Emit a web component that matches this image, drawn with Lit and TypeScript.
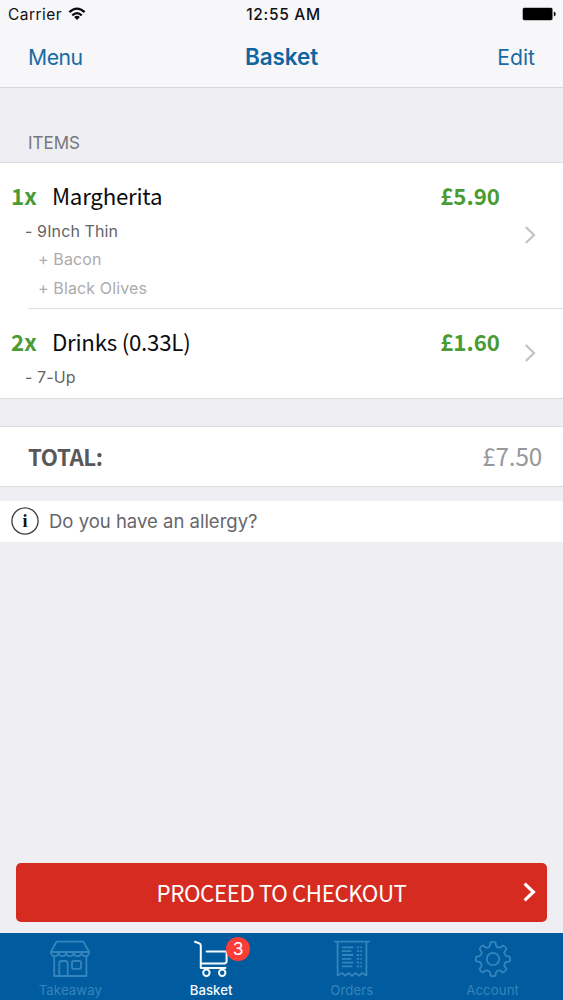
import { LitElement, html, css, svg } from "lit";
import { customElement, property } from "lit/decorators.js";

interface Item {
  qty: string;
  name: string;
  price: string;
  variant: string;
  extras: string[];
}

const ITEMS: Item[] = [
  { qty: "1x", name: "Margherita", price: "£5.90", variant: "- 9Inch Thin", extras: ["+ Bacon", "+ Black Olives"] },
  { qty: "2x", name: "Drinks (0.33L)", price: "£1.60", variant: "- 7-Up", extras: [] },
];

/* Eight-toothed cog outline centred on (20, 19). */
function cogPath(): string {
  const pts: string[] = [];
  const at = (deg: number, r: number) => {
    const a = (deg * Math.PI) / 180;
    return `${(20 + r * Math.sin(a)).toFixed(2)} ${(19 - r * Math.cos(a)).toFixed(2)}`;
  };
  for (let i = 0; i < 8; i++) {
    const c = i * 45;
    pts.push(`${i ? "L" : "M"}${at(c - 12, 13.9)}`);
    pts.push(`L${at(c - 8.5, 16.8)}`);
    pts.push(`Q${at(c, 17.8)} ${at(c + 8.5, 16.8)}`);
    pts.push(`L${at(c + 12, 13.9)}`);
    pts.push(`Q${at(c + 22.5, 11.4)} ${at(c + 33, 13.9)}`);
  }
  return pts.join("") + "Z";
}

const icons: Record<string, unknown> = {
  Takeaway: svg`
    <path d="M6.5 1.6h27l5.6 10.4H0.9z"/>
    <path d="M0.9 12c0 5.4 7.6 5.4 7.6 0c0 5.4 7.7 5.4 7.7 0c0 5.4 7.6 5.4 7.6 0c0 5.4 7.7 5.4 7.7 0c0 5.4 7.6 5.4 7.6 0"/>
    <path d="M4.2 16V36H36.4V16"/>
    <path d="M9.3 36V23.4q0-2.4 2.4-2.4h3.6q2.4 0 2.4 2.4V36"/>
    <rect x="22" y="21" width="9" height="7.8" rx="1.6"/>`,
  Basket: svg`
    <path d="M4 1.8L8 3.2Q9.8 3.8 9.8 5.6V28H34.5"/>
    <path d="M15.6 11.6H35.6V21Q35.6 23.4 33.2 23.4H9.8"/>
    <circle cx="15.4" cy="32.8" r="3.2"/>
    <circle cx="31.2" cy="32.8" r="3.2"/>`,
  Orders: svg`
    <path d="M3 1.6H37"/>
    <path d="M5.6 1.6V35.6L10 33L13.4 35.8L16.8 32.8L20 35.8L23.4 32.8L26.8 35.8L30.2 33L34.4 35.6V1.6"/>
    <path d="M10.6 7.4h10M10.6 11.2h8M10.6 15h10M10.6 18.8h8M10.6 22.6h10M10.6 26.4h9"/>
    <path stroke-linecap="butt" stroke-dasharray="2.4 1" d="M24.8 7.4h5M24.8 11.2h5M24.8 15h5M24.8 18.8h5M24.8 22.6h5M24.8 26.4h5"/>`,
  Account: svg`<path d="${cogPath()}"/><circle cx="20" cy="19" r="6.2"/>`,
};

@customElement("status-bar")
class StatusBar extends LitElement {
  static styles = css`
    :host { display: grid; grid-template-columns: 1fr auto 1fr; align-items: center; height: 28px;
      padding: 0 7px 0 8px; font-size: 15.5px; letter-spacing: 0.45px; color: #101013; }
    .left { display: flex; align-items: center; gap: 6px; }
    .time { font-weight: 550; font-size: 15.5px; letter-spacing: 0.7px; padding-left: 3px; }
    .battery { justify-self: end; }
    svg { display: block; }
  `;
  render() {
    return html`
      <div class="left">
        <span>Carrier</span>
        <svg width="18" height="14" viewBox="0 0 18 14">
          <g fill="none" stroke="#09090b" stroke-width="2.3">
            <path d="M1.4 5.2Q9-2 16.6 5.2"/><path d="M4.3 8.3Q9 3.9 13.7 8.3"/>
          </g>
          <path fill="#09090b" d="M6.1 10Q9 7.4 11.9 10L9 13z"/>
        </svg>
      </div>
      <span class="time">12:55 AM</span>
      <svg class="battery" width="34" height="14" viewBox="0 0 34 14">
        <rect x="0.4" y="0.4" width="30.4" height="13.2" rx="2" fill="#88888b"/>
        <rect x="1" y="1" width="29.2" height="12" rx="1.4" fill="#000"/>
        <path d="M31.8 4.6q2 .6 2 2.4t-2 2.4z" fill="#111"/>
      </svg>`;
  }
}

@customElement("basket-row")
class BasketRow extends LitElement {
  @property({ attribute: false }) item!: Item;
  static styles = css`
    :host { display: flex; align-items: center; padding: 0 27px 0 11px; }
    .body { flex: 1; align-self: flex-start; padding-top: 18px; }
    .head { display: flex; font: 400 22.3px/29px "Noto Sans CJK SC", "Noto Sans", sans-serif; color: #0c0c0e; }
    .qty { width: 41px; font-weight: 700; color: #4b9b33; }
    .name { flex: 1; letter-spacing: -0.25px; }
    .price { font-weight: 700; color: #4b9b33; letter-spacing: 0; }
    .sub { margin: 6.7px 0 0 14px; font-size: 16px; line-height: 28.5px; letter-spacing: 0.12px; color: #646466; }
    .extra { padding-left: 13px; color: #ababad; }
    .chevron { margin: 0 0 1px 25px; display: block; }
  `;
  render() {
    const i = this.item;
    return html`
      <div class="body">
        <div class="head">
          <span class="qty">${i.qty}</span><span class="name">${i.name}</span><span class="price">${i.price}</span>
        </div>
        <div class="sub">
          <div>${i.variant}</div>
          ${i.extras.map((e) => html`<div class="extra">${e}</div>`)}
        </div>
      </div>
      <svg class="chevron" width="11" height="18" viewBox="0 0 11 18">
        <path d="M0.8 1L9 9L0.8 17" fill="none" stroke="#c4c4c8" stroke-width="2.3"/>
      </svg>`;
  }
}

@customElement("tab-item")
class TabItem extends LitElement {
  @property() label = "";
  @property() badge = "";
  @property({ type: Boolean }) active = false;
  static styles = css`
    :host { display: flex; flex-direction: column; align-items: center; padding-top: 7px; color: #3585bd; }
    :host([active]) { color: #f4f9fc; }
    .icon { position: relative; display: block; height: 38px; }
    svg { display: block; }
    .badge { position: absolute; left: 35px; top: -3px; width: 24px; height: 24px; border-radius: 50%;
      background: #fb3d38; color: #fff; font-size: 17.5px; line-height: 24px; text-align: center; }
    .label { font-size: 13.2px; line-height: 16px; margin-top: 4px; letter-spacing: 0.1px; }
    .strong { font-weight: 500; letter-spacing: 0; }
  `;
  render() {
    return html`
      <div class="icon">
        <svg width="40" height="38" viewBox="0 0 40 38" fill="none" stroke="currentColor"
          stroke-width=${this.active ? 2 : 1.8} stroke-linejoin="round" stroke-linecap="round">
          ${icons[this.label]}
        </svg>
        ${this.badge ? html`<span class="badge">${this.badge}</span>` : ""}
      </div>
      <span class="label ${this.active ? "strong" : ""}">${this.label}</span>`;
  }
}

@customElement("app-root")
class AppRoot extends LitElement {
  static styles = css`
    :host { display: flex; flex-direction: column; box-sizing: border-box; width: 563px; height: 1000px;
      overflow: hidden; background: #efeef3; font-family: Inter, "Liberation Sans", sans-serif; }
    .top { background: #f7f6f9; border-bottom: 1px solid #d6d5d9; height: 87px; flex: none; }
    .nav { display: grid; grid-template-columns: 1fr auto 1fr; align-items: center; height: 57px;
      padding: 0 28px; font-size: 21.2px; color: #176ba3; }
    .menu { letter-spacing: -0.5px; }
    .title { font-weight: 600; font-size: 22.5px; letter-spacing: -0.1px; color: #0f65a0; }
    .edit { justify-self: end; }
    .section { height: 20px; padding: 45px 28px 9px; font-size: 17px; line-height: 20px; color: #77777b; }
    .list { background: #fff; border-top: 1px solid #dcdbe0; border-bottom: 1px solid #dcdbe0; }
    .first { height: 145px; }
    .second { height: 89px; }
    .rule { height: 1px; margin-left: 28px; background: #dfdfe2; }
    .total { display: flex; justify-content: space-between; align-items: center; height: 57px; margin-top: 27px;
      padding: 0 21px 2px 28px; background: #fff; border-top: 1px solid #dcdbe0; border-bottom: 1px solid #dcdbe0;
      font: 700 22.3px/34px "Noto Sans CJK SC", "Noto Sans", sans-serif; color: #58585a; }
    .label { letter-spacing: -0.4px; }
    .sum { font-weight: 400; font-size: 24.3px; letter-spacing: -0.2px; color: #98989b; }
    .allergy { display: flex; align-items: center; gap: 10px; height: 39px; margin-top: 14px; padding: 0 0 2px 11px;
      background: #fff; font-size: 18.5px; color: #66666a; }
    .info { display: block; }
    .glyph { font: 700 18px "Liberation Serif", serif; }
    .checkout { display: grid; grid-template-columns: 1fr auto 1fr; align-items: center; height: 59.4px;
      margin: auto 16px 11px 16px; padding: 0 11px; border-radius: 5px; background: #d62b20; color: #fff;
      font: 400 22.3px/34px "Noto Sans CJK SC", "Noto Sans", sans-serif; letter-spacing: -0.4px; }
    .cta { grid-column: 2; }
    .go { justify-self: end; display: block; }
    .tabs { display: grid; grid-template-columns: repeat(4, 1fr); height: 67px; flex: none; background: #005c9e; }
  `;
  render() {
    return html`
      <div class="top">
        <status-bar></status-bar>
        <div class="nav"><span class="menu">Menu</span><span class="title">Basket</span><span class="edit">Edit</span></div>
      </div>
      <div class="section">ITEMS</div>
      <div class="list">
        <basket-row class="first" .item=${ITEMS[0]}></basket-row>
        <div class="rule"></div>
        <basket-row class="second" .item=${ITEMS[1]}></basket-row>
      </div>
      <div class="total"><span class="label">TOTAL:</span><span class="sum">£7.50</span></div>
      <div class="allergy">
        <svg class="info" width="28" height="28" viewBox="0 0 28 28">
          <circle cx="14" cy="14" r="13.1" fill="none" stroke="#3c3c3e" stroke-width="1.3"/>
          <text class="glyph" x="14" y="20" text-anchor="middle" fill="#111">i</text>
        </svg>
        <span>Do you have an allergy?</span>
      </div>
      <div class="checkout">
        <span class="cta">PROCEED TO CHECKOUT</span>
        <svg class="go" width="13" height="20" viewBox="0 0 13 20">
          <path d="M1.6 1.6L10.4 10L1.6 18.4" fill="none" stroke="#fff" stroke-width="3.2"/>
        </svg>
      </div>
      <div class="tabs">
        <tab-item label="Takeaway"></tab-item>
        <tab-item label="Basket" badge="3" active></tab-item>
        <tab-item label="Orders"></tab-item>
        <tab-item label="Account"></tab-item>
      </div>`;
  }
}
